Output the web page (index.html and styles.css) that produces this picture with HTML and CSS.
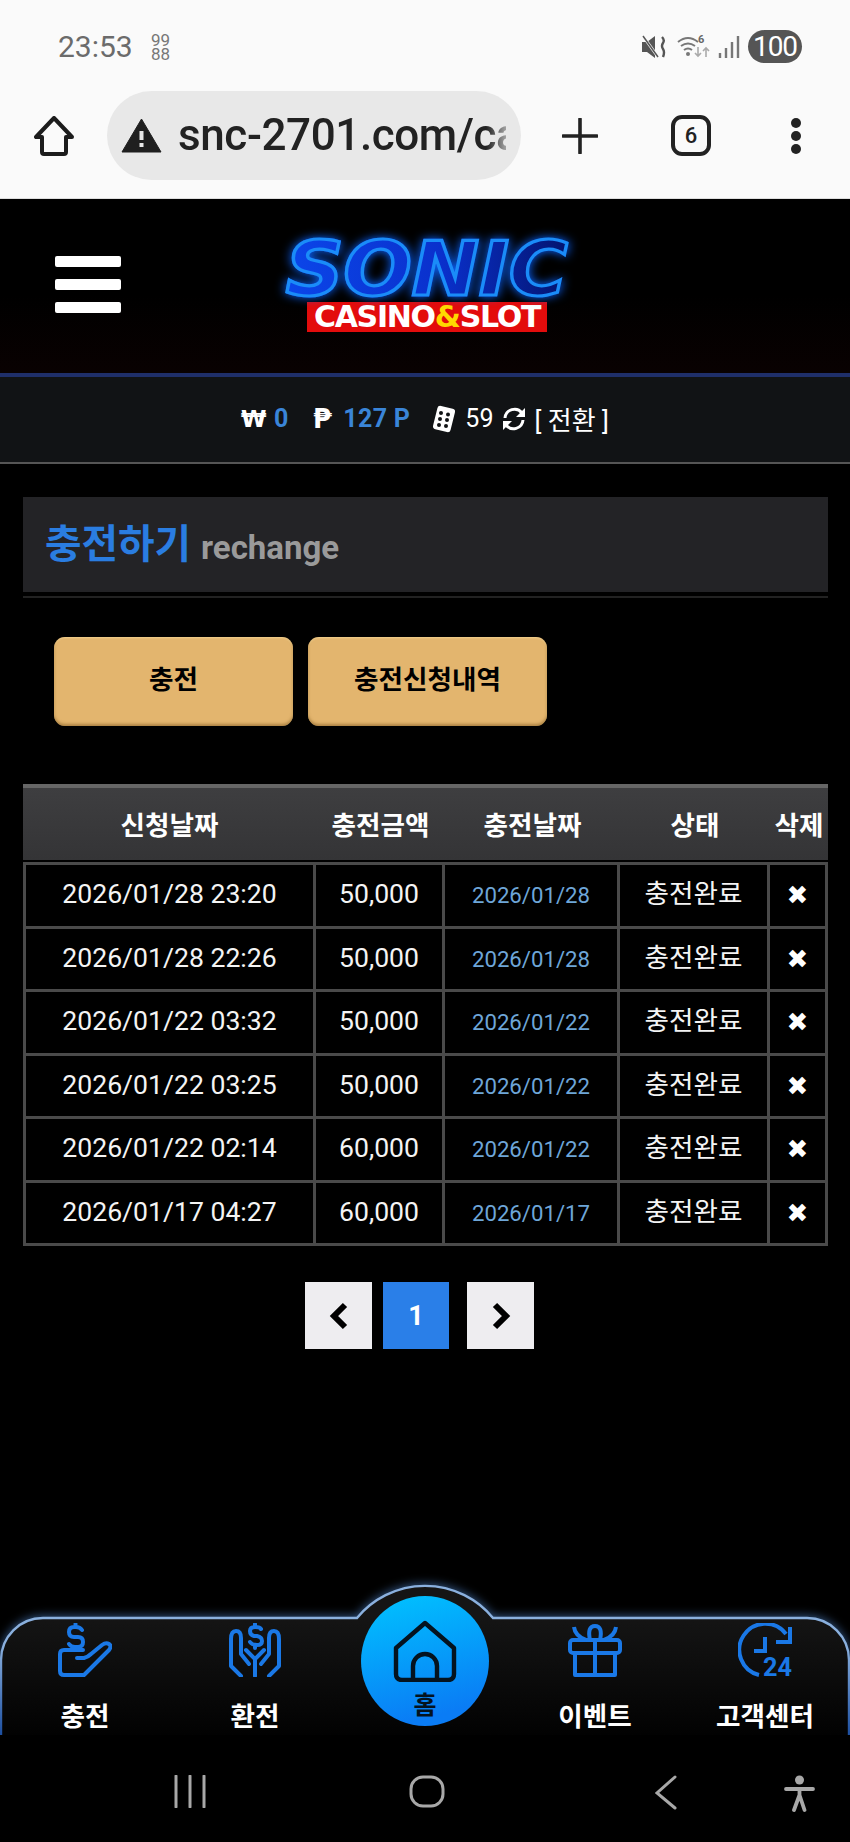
FILE: index.html
```html
<!DOCTYPE html>
<html lang="ko">
<head>
<meta charset="utf-8">
<title>충전하기</title>
<link rel="stylesheet" href="styles.css">
</head>
<body>
<div class="phone">
  <div class="browser">
    <div class="status">
      <span class="time">23:53</span>
      <span class="notif">99<br>88</span>
      <span class="status-right">
        <svg class="st-mute" viewBox="0 0 25 24"><path d="M1 7h5l8-6v22l-8-6H1z" fill="#555"/><path d="M2 1l15 21" stroke="#fafafa" stroke-width="3"/><path d="M2 1l15 21" stroke="#555" stroke-width="1.5"/><path d="M21 2q3 3 1 6t0 6q2 3 0 8" fill="none" stroke="#555" stroke-width="2.4"/></svg>
        <svg class="st-wifi" viewBox="0 0 35 26"><path d="M2 8q10-8 20 0M5 12q7-5 14 0M8 16q4-3 8 0" fill="none" stroke="#777" stroke-width="2"/><circle cx="12" cy="20" r="2" fill="#777"/><text x="22" y="9" class="st-six">6</text><path d="M22 13v9m-3-3l3 3 3-3M30 23v-9m-3 3l3-3 3 3" fill="none" stroke="#aaa" stroke-width="1.6"/></svg>
        <svg class="st-signal" viewBox="0 0 22 22"><path d="M2 17v5M8 12v10M14 6v16M20 0v22" stroke="#777" stroke-width="2.4"/></svg>
        <span class="battery">100</span>
      </span>
    </div>
    <div class="toolbar">
      <svg class="tb-home" viewBox="0 0 40 40"><path d="M20 2 2 21h6v15q0 2 2 2h20q2 0 2-2V21h6z" fill="none" stroke="#1c1c1c" stroke-width="4" stroke-linejoin="round"/></svg>
      <div class="addr">
        <svg class="warn" viewBox="0 0 41 35"><path d="M20.5 1 40 34H1z" fill="#1f1f1f" stroke="#1f1f1f" stroke-linejoin="round"/><rect x="18.5" y="13" width="4" height="9" fill="#e8e8e8"/><rect x="18.5" y="25" width="4" height="4" fill="#e8e8e8"/></svg>
        <span class="url">snc-2701.com/casino</span>
      </div>
      <svg class="tb-plus" viewBox="0 0 36 36"><path d="M18 1v34M1 18h34" stroke="#222" stroke-width="3.6" stroke-linecap="round"/></svg>
      <span class="tabs">6</span>
      <svg class="tb-dots" viewBox="0 0 10 36"><circle cx="5" cy="5" r="5" fill="#222"/><circle cx="5" cy="18" r="5" fill="#222"/><circle cx="5" cy="31" r="5" fill="#222"/></svg>
    </div>
  </div>

  <header class="site-header">
    <div class="burger"><i></i><i></i><i></i></div>
    <div class="logo">
      <div class="logo-sonic">SONIC</div>
      <div class="logo-sub">CASINO<em>&amp;</em>SLOT</div>
    </div>
  </header>

  <div class="balance">
    <b class="sym">₩</b><b class="val val-won">0</b>
    <b class="sym sym-p">₱</b><b class="val val-pt">127 P</b>
    <svg class="dice" viewBox="0 0 24 28"><rect x="3" y="2" width="18" height="24" rx="3" transform="rotate(14 12 14)" fill="#fff"/><g fill="#111315"><circle cx="9" cy="8" r="2"/><circle cx="16" cy="9.5" r="2"/><circle cx="8" cy="14" r="2"/><circle cx="15" cy="15" r="2"/><circle cx="7" cy="20" r="2"/><circle cx="14" cy="21" r="2"/></g></svg>
    <span class="plain">59</span>
    <svg class="refresh" viewBox="0 0 26 26"><path d="M4 12A9.5 9.5 0 0 1 21 7" fill="none" stroke="#fff" stroke-width="3"/><path d="M24 2v9h-9z" fill="#fff"/><path d="M22 14A9.5 9.5 0 0 1 5 19" fill="none" stroke="#fff" stroke-width="3"/><path d="M2 24v-9h9z" fill="#fff"/></svg>
    <span class="plain swap">[ 전환 ]</span>
  </div>

  <main class="content">
    <div class="title-bar"><strong>충전하기</strong><span>rechange</span></div>
    <div class="title-rule"></div>
    <div class="actions">
      <a class="btn">충전</a>
      <a class="btn">충전신청내역</a>
    </div>
    <table class="history">
      <colgroup><col class="c1"><col class="c2"><col class="c3"><col class="c4"><col class="c5"></colgroup>
      <thead>
        <tr><th>신청날짜</th><th>충전금액</th><th>충전날짜</th><th>상태</th><th>삭제</th></tr>
      </thead>
      <tbody>
        <tr><td>2026/01/28 23:20</td><td>50,000</td><td class="date">2026/01/28</td><td>충전완료</td><td class="del">✖</td></tr>
        <tr><td>2026/01/28 22:26</td><td>50,000</td><td class="date">2026/01/28</td><td>충전완료</td><td class="del">✖</td></tr>
        <tr><td>2026/01/22 03:32</td><td>50,000</td><td class="date">2026/01/22</td><td>충전완료</td><td class="del">✖</td></tr>
        <tr><td>2026/01/22 03:25</td><td>50,000</td><td class="date">2026/01/22</td><td>충전완료</td><td class="del">✖</td></tr>
        <tr><td>2026/01/22 02:14</td><td>60,000</td><td class="date">2026/01/22</td><td>충전완료</td><td class="del">✖</td></tr>
        <tr><td>2026/01/17 04:27</td><td>60,000</td><td class="date">2026/01/17</td><td>충전완료</td><td class="del">✖</td></tr>
      </tbody>
    </table>
    <div class="pager">
      <a class="page"><svg class="chev" viewBox="0 0 20 28"><path d="M16 3 5 14l11 11" fill="none" stroke="#000" stroke-width="6"/></svg></a>
      <a class="page current">1</a>
      <a class="page page-next"><svg class="chev" viewBox="0 0 20 28"><path d="M4 3l11 11L4 25" fill="none" stroke="#000" stroke-width="6"/></svg></a>
    </div>
  </main>

  <nav class="bottom-nav">
    <svg class="nav-shape" viewBox="0 0 850 149" preserveAspectRatio="none">
      <defs>
        <linearGradient id="navFill" x1="0" y1="0" x2="0" y2="1"><stop offset="0.2" stop-color="#151515"/><stop offset="1" stop-color="#020202"/></linearGradient>
        <linearGradient id="navStroke" gradientUnits="userSpaceOnUse" x1="0" y1="0" x2="0" y2="149"><stop offset="0.4" stop-color="#8ab0de"/><stop offset="1" stop-color="#1d4fa0"/></linearGradient>
      </defs>
      <path d="M1 149V74A42 42 0 0 1 43 32H357A88 88 0 0 1 493 32H807A42 42 0 0 1 849 74V149" fill="url(#navFill)" stroke="url(#navStroke)" stroke-width="2.4"/>
    </svg>
    <div class="nav-items">
      <a class="nav-item">
        <svg class="nav-icon" viewBox="0 0 54 54"><g fill="none" stroke="#1a78e6" stroke-width="4" stroke-linecap="round" stroke-linejoin="round"><path d="M24 7q-2-3-6-3h-2q-5 0-5 5t5 5h4q5 0 5 5t-5 5h-3q-4 0-6-3M17.500 1v3M17.500 24v3"/><path d="M25 27H6q-4 0-4 4v17q0 4 4 4h20L51 27q3-4 0-6t-7 1L33 31q-3 3-7 4h-7"/></g></svg>
        <span>충전</span>
      </a>
      <a class="nav-item">
        <svg class="nav-icon" viewBox="0 0 54 54"><g fill="none" stroke="#1a78e6" stroke-width="4" stroke-linecap="round" stroke-linejoin="round"><path d="M33 6q-1-2-6-2t-5 4 4 5h3q5 1 5 5t-5 4-7-3M27 1v3M27 22v3"/><path d="M13 53 3 43V16q0-8 5-8t5 7v16l8 10"/><path d="M41 53l10-10V16q0-8-5-8t-5 7v16l-8 10"/><path d="M18 27l9 9v17M36 27l-9 9"/></g></svg>
        <span>환전</span>
      </a>
      <a class="nav-item nav-spacer"></a>
      <a class="nav-item">
        <svg class="nav-icon" viewBox="0 0 54 54"><g fill="none" stroke="#1a78e6" stroke-width="4" stroke-linejoin="round"><rect x="2" y="17" width="50" height="13" rx="3"/><path d="M7 30v22h40V30M27 17v35"/><path d="M22 17Q19 3 27 3t5 14"/><path d="M6 4q1 9 12 13M48 4q-1 9-12 13"/></g></svg>
        <span>이벤트</span>
      </a>
      <a class="nav-item">
        <svg class="nav-icon" viewBox="0 0 54 54"><g fill="none" stroke="#1a78e6" stroke-width="4"><path d="M21 52A26 26 0 1 1 48 11"/><path d="M52 4v15H38M27 14v14H16"/></g><text x="25" y="53" class="nav-24" textLength="29" lengthAdjust="spacingAndGlyphs">24</text></svg>
        <span>고객센터</span>
      </a>
    </div>
    <a class="home-btn">
      <svg class="home-icon" viewBox="0 0 64 62"><g fill="none" stroke="#04131f" stroke-width="4.4" stroke-linejoin="round"><path d="M32 3 3 28v26q0 6 6 6h46q6 0 6-6V28z"/><path d="M20 60V46a12 12 0 0 1 24 0v14"/></g></svg>
      <span>홈</span>
    </a>
  </nav>

  <div class="system-nav">
    <svg class="sys-recent" viewBox="0 0 32 33"><path d="M2 1v31M16 1v31M30 1v31" stroke="#a8a8a8" stroke-width="3" stroke-linecap="round"/></svg>
    <svg class="sys-home" viewBox="0 0 36 33"><rect x="2" y="2" width="32" height="29" rx="12" fill="none" stroke="#a8a8a8" stroke-width="3"/></svg>
    <svg class="sys-back" viewBox="0 0 22 35"><path d="M20 2 2 18l18 15" fill="none" stroke="#a8a8a8" stroke-width="3" stroke-linecap="round"/></svg>
    <svg class="sys-a11y" viewBox="0 0 31 37"><circle cx="15.500" cy="5" r="4.500" fill="#a8a8a8"/><path d="M2 14h27M15.500 14v8M15.500 20 10 35M15.500 20l5 15" fill="none" stroke="#a8a8a8" stroke-width="3.800" stroke-linecap="round"/></svg>
  </div>
</div>
</body>
</html>
```

FILE: styles.css
```css
* { box-sizing: border-box; }
html, body { margin: 0; padding: 0; background: #000; }
body { font-family: Roboto, "Noto Sans CJK KR", sans-serif; color: #fff; }
a { color: inherit; text-decoration: none; }

.phone { width: 850px; height: 1842px; display: flex; flex-direction: column; overflow: hidden; background: #000; }

/* browser chrome */
.browser { height: 199px; flex: none; background: #fafafa; border-bottom: 1px solid #ddd; padding-top: 30px; }
.status { display: flex; align-items: center; height: 33px; padding: 0 48px 0 58px; }
.time { font-size: 30px; line-height: 33px; color: #6b6b6b; width: 75px; }
.notif { font-size: 17px; line-height: 14px; color: #777; margin-left: 18px; }
.status-right { margin-left: auto; display: flex; align-items: center; }
.st-mute { width: 25px; height: 24px; }
.st-wifi { width: 35px; height: 26px; margin-left: 10px; }
.st-six { font: 700 11px Roboto, sans-serif; fill: #666; }
.st-signal { width: 22px; height: 22px; margin-left: 7px; }
.battery { width: 54px; height: 33px; margin-left: 8px; border-radius: 17px; background: #555; color: #fff; font-size: 28px; line-height: 33px; text-align: center; letter-spacing: -1px; }
.toolbar { display: flex; align-items: center; height: 89px; margin-top: 28px; padding-left: 34px; }
.tb-home { width: 40px; height: 40px; }
.addr { display: flex; align-items: center; width: 414px; height: 89px; margin-left: 33px; padding-left: 14px; border-radius: 45px; background: #e8e8e8; }
.warn { width: 41px; height: 35px; flex: none; }
.url { width: 328px; margin-left: 16px; font-size: 44px; font-weight: 500; letter-spacing: -0.4px; line-height: 89px; color: #222; white-space: nowrap; overflow: hidden; -webkit-mask-image: linear-gradient(90deg, #000 94%, rgba(0,0,0,.35) 100%); mask-image: linear-gradient(90deg, #000 94%, rgba(0,0,0,.35) 100%); }
.tb-plus { width: 36px; height: 36px; margin-left: 41px; }
.tabs { width: 40px; height: 41px; margin-left: 73px; border: 4px solid #222; border-radius: 11px; color: #222; font-size: 22px; font-weight: 500; line-height: 33px; text-align: center; }
.tb-dots { width: 10px; height: 36px; margin-left: 80px; }

/* site header */
.site-header { height: 174px; flex: none; display: flex; padding: 57px 0 0 55px; background: linear-gradient(#000 55%, #090101); }
.burger { width: 66px; display: flex; flex-direction: column; gap: 12px; }
.burger i { display: block; height: 11px; border-radius: 2px; background: #fff; }
.logo { margin: -18px 0 0 164px; width: 284px; height: 94px; display: flex; flex-direction: column; align-items: center; }
.logo-sonic { font: italic 700 75px/62px "DejaVu Sans", sans-serif; transform: scaleX(1.07); color: transparent; background: linear-gradient(90deg, #0b46ea, #0a30cc 55%, #03146e); -webkit-background-clip: text; background-clip: text; -webkit-text-stroke: 3.2px #1a8cf8; filter: drop-shadow(0 0 5px #0a62ff); }
.logo-sub { margin-top: 2px; width: 240px; height: 30px; background: #e30c0c; color: #fff; font: 700 30px/30px "DejaVu Sans", sans-serif; text-align: center; white-space: nowrap; letter-spacing: -1.3px; }
.logo-sub em { font-style: normal; color: #ffd800; }

/* balance */
.balance { height: 91px; flex: none; display: flex; align-items: center; padding: 0 0 2px 241px; background: #111315; border-top: 4px solid #1f2f6a; border-bottom: 2px solid #555; font-size: 25px; }
.sym { width: 25px; font-family: "DejaVu Sans", sans-serif; font-weight: 700; font-size: 23px; text-align: center; }
.sym-p { margin-left: 23px; width: 22px; font-size: 27px; line-height: 30px; }
.val { color: #3a85d8; font-weight: 700; }
.val-won { margin-left: 8px; }
.val-pt { margin-left: 10px; width: 67px; white-space: nowrap; letter-spacing: 0.3px; }
.dice { width: 24px; height: 28px; margin-left: 22px; }
.balance .plain { margin-left: 9px; color: #fff; }
.balance .swap { margin-left: 7px; font-size: 26px; }
.refresh { width: 26px; height: 26px; margin-left: 8px; }

/* content */
.content { flex: 1; padding: 33px 22px 0 23px; }
.title-bar { height: 95px; display: flex; align-items: center; padding: 0 0 0 22px; background: #232326; }
.title-bar strong { font-size: 39.7px; line-height: 95px; font-weight: 700; color: #2a7de1; }
.title-bar span { margin-left: 10px; padding-top: 5px; font-size: 33px; font-weight: 700; color: #9a9a9a; }
.title-rule { height: 2px; margin-top: 4px; background: #222; }
.actions { display: flex; gap: 15px; margin: 39px 0 0 31px; }
.btn { width: 239px; height: 89px; border-radius: 11px; background: #e3b56e; color: #000; font-size: 26.6px; font-weight: 700; line-height: 86px; text-align: center; box-shadow: inset 0 -2px 3px rgba(150, 110, 50, .7), inset 0 1px 2px rgba(255, 230, 170, .6); }

.history { margin-top: 58px; width: 805px; table-layout: fixed; border-collapse: separate; border-spacing: 0; }
.c1 { width: 293px; } .c2 { width: 129px; } .c3 { width: 175px; } .c4 { width: 150px; } .c5 { width: 58px; }
.history th { height: 78px; padding: 0 0 2px; border-top: 4px solid #666; border-bottom: 2px solid #000; background: linear-gradient(#3e3e40, #343436); background-clip: padding-box; font-size: 26.6px; font-weight: 700; color: #fff; }
.history td { height: 63.5px; padding: 0 0 2px; border-right: 3px solid #4a4a4a; border-bottom: 3px solid #4a4a4a; font-size: 26.6px; line-height: 34px; text-align: center; color: #f4f4f4; background: #000; white-space: nowrap; }
.history td:first-child { border-left: 3px solid #4a4a4a; }
.history tbody tr:first-child td { height: 66.5px; border-top: 3px solid #4a4a4a; }
.history td.date { padding: 0; font-size: 22.2px; color: #6ea6d8; }
.history td.del { padding: 0; font: 26px "DejaVu Sans", sans-serif; color: #fff; }

.pager { display: flex; margin: 36px 0 0 282px; }
.page { width: 67px; height: 67px; display: flex; align-items: center; justify-content: center; background: #eeedf0; }
.page.current { width: 66px; margin-left: 11px; background: #2a7fe8; color: #fff; font-size: 27px; font-weight: 700; }
.page-next { margin-left: 18px; }
.chev { width: 20px; height: 28px; }

/* bottom nav */
.bottom-nav { position: relative; height: 149px; flex: none; }
.nav-shape { position: absolute; left: 0; top: 0; width: 850px; height: 149px; overflow: visible; filter: drop-shadow(0 -1px 5px rgba(90, 150, 230, .55)); clip-path: inset(-20px 0 0 0); }
.nav-items { position: relative; display: grid; grid-template-columns: repeat(5, 170px); padding-top: 37px; }
.nav-item { display: flex; flex-direction: column; align-items: center; font-size: 26.6px; font-weight: 700; color: #fff; }
.nav-item span { margin-top: 23px; line-height: 34px; white-space: nowrap; }
.nav-icon { width: 54px; height: 54px; display: block; }
.nav-24 { font: 700 25px Roboto, sans-serif; fill: #1a78e6; }
.home-btn { position: absolute; left: 361px; top: 10px; width: 128px; height: 130px; border-radius: 50%; background: linear-gradient(165deg, #00c4ff, #0a7cf5 85%); display: flex; flex-direction: column; align-items: center; padding-top: 24px; color: #04131f; font-size: 25px; font-weight: 700; }
.home-icon { width: 64px; height: 62px; flex: none; }
.home-btn span { margin-top: 9px; line-height: 30px; }

/* system nav */
.system-nav { height: 107px; flex: none; display: flex; align-items: flex-start; padding: 40px 0 0 174px; background: #000; }
.sys-recent { width: 32px; height: 33px; }
.sys-home { width: 36px; height: 33px; margin-left: 203px; }
.sys-back { width: 22px; height: 35px; margin-left: 210px; }
.sys-a11y { width: 31px; height: 37px; margin-left: 107px; }
```
